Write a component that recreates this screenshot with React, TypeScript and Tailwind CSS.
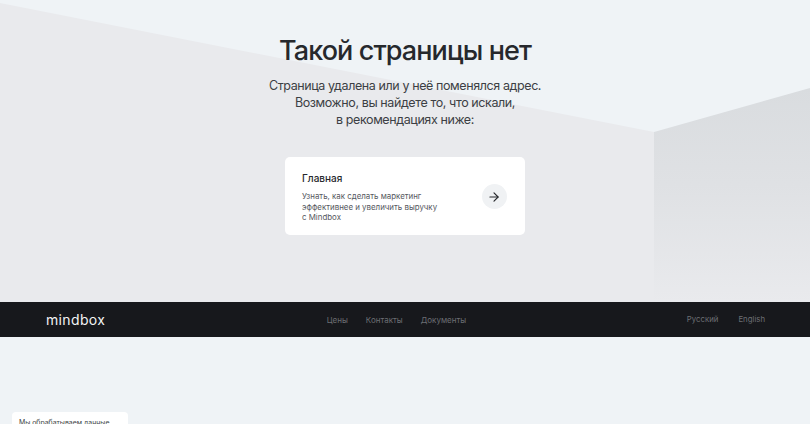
import { ArrowRight } from 'lucide-react';

const footerLinks = ["Цены", "Контакты", "Документы"];
const languages = ["Русский", "English"];

function Backdrop() {
  return (
    <svg className="absolute inset-0 w-full h-full" viewBox="0 0 810 302" preserveAspectRatio="none">
      <defs>
        <linearGradient id="rightWall" x1="0" y1="0" x2="0" y2="1">
          <stop offset="0" stopColor="#d9dcdf" />
          <stop offset="0.45" stopColor="#dfe1e4" />
          <stop offset="1" stopColor="#e9eaed" />
        </linearGradient>
      </defs>
      <polygon points="0,3 654,132 654,302 0,302" fill="#e9eaed" />
      <polygon points="654,132 810,88 810,302 654,302" fill="url(#rightWall)" />
    </svg>
  );
}

export default function App() {
  return (
    <div className="relative h-[424px] w-[810px] overflow-hidden bg-[#eff3f6] font-['Inter',sans-serif]">
      {/* Hero */}
      <section className="relative h-[302px] flex flex-col items-center pt-[34px]">
        <Backdrop />
        <div className="relative flex flex-col items-center">
          <h1 className="text-[27px] leading-[34px] font-medium tracking-[-0.9px] text-[#26282c]">
            Такой страницы нет
          </h1>
          <p className="mt-[9px] text-center text-[12.5px] leading-[17px] tracking-[-0.4px] text-[#3c3f44]">
            Страница удалена или у неё поменялся адрес.
            <br />
            Возможно, вы найдете то, что искали,
            <br />
            в рекомендациях ниже:
          </p>

          {/* Card */}
          <a className="mt-[28.5px] w-[240px] h-[78px] flex items-center justify-between rounded-[5px] bg-white pl-[17px] pr-[18px]">
            <div className="pt-[4px]">
              <div className="text-[10px] leading-[13px] font-medium text-[#26282c]">Главная</div>
              <div className="mt-[6px] text-[7.9px] leading-[10.5px] text-[#55585e]">
                Узнать, как сделать маркетинг
                <br />
                эффективнее и увеличить выручку
                <br />
                с Mindbox
              </div>
            </div>
            <div className="mt-[2px] w-[25px] h-[25px] flex items-center justify-center rounded-full bg-[#f0f2f4]">
              <ArrowRight size={14} strokeWidth={2} className="text-[#26282c]" />
            </div>
          </a>
        </div>
      </section>

      {/* Footer */}
      <footer className="relative h-[35px] flex items-center justify-between bg-[#17181c] pl-[46px] pr-[45px]">
        <span className="w-[132px] text-[14px] font-normal tracking-[0.35px] text-[#f2f3f4]">mindbox</span>
        <nav className="flex items-center gap-[18px] pt-[1px] text-[8px] text-[#6c6e73]">
          {footerLinks.map((link) => (
            <a key={link}>{link}</a>
          ))}
        </nav>
        <div className="w-[150px] flex items-center justify-end gap-[20px] pt-[1px] text-[7.8px] text-[#6c6e73]">
          {languages.map((lang) => (
            <a key={lang}>{lang}</a>
          ))}
        </div>
      </footer>

      {/* Cookie notice */}
      <div className="absolute left-[12px] top-[412px] w-[116px] rounded-[4px] bg-white px-[7px] pt-[6px] pb-[20px] text-[6.9px] leading-[10px] text-[#3c3f44]">
        Мы обрабатываем данные
      </div>
    </div>
  );
}
